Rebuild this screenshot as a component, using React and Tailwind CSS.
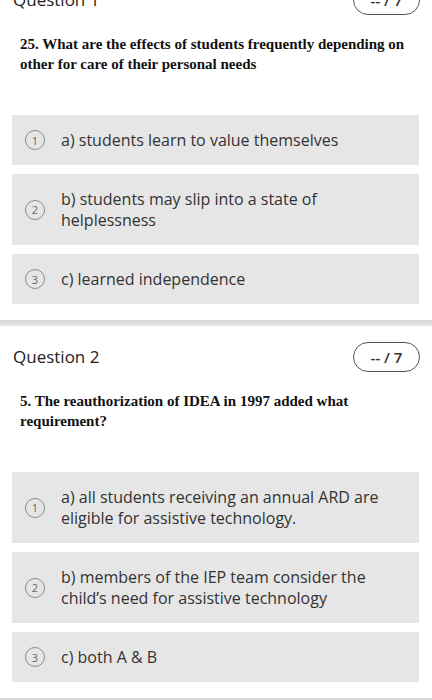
import React from "react"

const questions = [
  {
    title: "Question 1",
    prompt: "25. What are the effects of students frequently depending on other for care of their personal needs",
    options: [
      "a) students learn to value themselves",
      "b) students may slip into a state of helplessness",
      "c) learned independence",
    ],
  },
  {
    title: "Question 2",
    prompt: "5. The reauthorization of IDEA in 1997 added what requirement?",
    options: [
      "a) all students receiving an annual ARD are eligible for assistive technology.",
      "b) members of the IEP team consider the child’s need for assistive technology",
      "c) both A & B",
    ],
  },
]

function Option({ index, text }) {
  return (
    <div className="flex items-center bg-[#e6e6e6] pl-[13px] pr-[28px] py-[14.5px]">
      <div className="flex h-[20px] w-[20px] shrink-0 items-center justify-center rounded-full border border-[#8a8a8a] text-[11px] leading-none text-[#666]">
        {index}
      </div>
      <div className="ml-[16px] text-[16px] leading-[21px] text-[#333]">{text}</div>
    </div>
  )
}

function QuestionBlock({ q }) {
  return (
    <div className="pb-[16px]">
      <div className="flex items-center justify-between pl-[13px] pr-[12px] pt-[16px]">
        <div className="text-[17px] leading-[30px] text-[#222]">{q.title}</div>
        <div className="flex h-[30px] w-[67px] items-center justify-center rounded-full border border-[#555] text-[15px] font-semibold text-[#333]">
          -- / 7
        </div>
      </div>
      <div
        className="mt-[19px] pl-[20px] pr-[20px] text-[15px] font-bold leading-[20px] text-[#111]"
        style={{ fontFamily: '"Liberation Serif", "Times New Roman", serif' }}
      >
        {q.prompt}
      </div>
      <div className="mt-[41px] flex flex-col gap-[9px] pl-[12px] pr-[13px]">
        {q.options.map((o, i) => (
          <Option key={i} index={i + 1} text={o} />
        ))}
      </div>
    </div>
  )
}

export default function App() {
  return (
    <div
      className="h-[700px] w-[432px] overflow-hidden bg-white"
      style={{ fontFamily: '"Open Sans", "Noto Sans", sans-serif' }}
    >
      <div className="mt-[-31px]">
        {questions.map((q, i) => (
          <div key={i}>
            <QuestionBlock q={q} />
            <div className="h-[6px] bg-gradient-to-b from-[#d6d6d6] to-[#e8e8e8]" />
          </div>
        ))}
      </div>
    </div>
  )
}
